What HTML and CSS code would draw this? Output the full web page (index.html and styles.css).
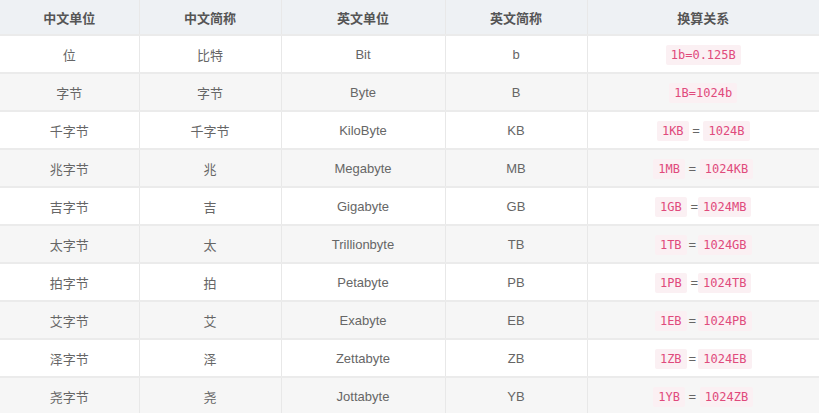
FILE: index.html
```html
<!DOCTYPE html>
<html lang="zh">
<head>
<meta charset="utf-8">
<link rel="stylesheet" href="styles.css">
</head>
<body>
<table class="units">
  <colgroup>
    <col class="c1"><col class="c2"><col class="c3"><col class="c4"><col class="c5">
  </colgroup>
  <thead>
    <tr><th>中文单位</th><th>中文简称</th><th>英文单位</th><th>英文简称</th><th>换算关系</th></tr>
  </thead>
  <tbody>
    <tr><td>位</td><td>比特</td><td>Bit</td><td>b</td><td><code>1b=0.125B</code></td></tr>
    <tr><td>字节</td><td>字节</td><td>Byte</td><td>B</td><td><code>1B=1024b</code></td></tr>
    <tr><td>千字节</td><td>千字节</td><td>KiloByte</td><td>KB</td><td><code>1KB</code> = <code>1024B</code></td></tr>
    <tr><td>兆字节</td><td>兆</td><td>Megabyte</td><td>MB</td><td><code>1MB</code> = <code>1024KB</code></td></tr>
    <tr><td>吉字节</td><td>吉</td><td>Gigabyte</td><td>GB</td><td><code>1GB</code> =<code>1024MB</code></td></tr>
    <tr><td>太字节</td><td>太</td><td>Trillionbyte</td><td>TB</td><td><code>1TB</code><span class="eq">=</span><code>1024GB</code></td></tr>
    <tr><td>拍字节</td><td>拍</td><td>Petabyte</td><td>PB</td><td><code>1PB</code> =<code>1024TB</code></td></tr>
    <tr><td>艾字节</td><td>艾</td><td>Exabyte</td><td>EB</td><td><code>1EB</code><span class="eq">=</span><code>1024PB</code></td></tr>
    <tr><td>泽字节</td><td>泽</td><td>Zettabyte</td><td>ZB</td><td><code>1ZB</code><span class="eq">=</span><code>1024EB</code></td></tr>
    <tr><td>尧字节</td><td>尧</td><td>Jottabyte</td><td>YB</td><td><code>1YB</code> = <code>1024ZB</code></td></tr>
  </tbody>
</table>
</body>
</html>
```
FILE: styles.css
```css
html, body {
  margin: 0;
  padding: 0;
  background: #ffffff;
}
body {
  font-family: "Liberation Sans", "Noto Sans CJK SC", sans-serif;
  font-size: 13px;
  color: #666666;
}
.units {
  width: 819px;
  border-collapse: collapse;
  table-layout: fixed;
}
.c1 { width: 139px; }
.c2 { width: 142px; }
.c3 { width: 164px; }
.c4 { width: 142px; }
.c5 { width: 232px; }
.units th,
.units td {
  text-align: center;
  vertical-align: middle;
  padding: 0;
  border-right: 1px solid #e8e8e8;
  border-bottom: 2px solid #ebebeb;
  white-space: nowrap;
}
.units th:last-child,
.units td:last-child {
  border-right: none;
}
.units th {
  height: 34px;
  background: #eef1f4;
  color: #555555;
  font-weight: bold;
  font-size: 13px;
}
.units td {
  height: 36px;
}
.units tbody tr:nth-child(even) td {
  background: #f6f6f6;
}
code {
  font-family: "DejaVu Sans Mono", "Liberation Mono", monospace;
  font-size: 12px;
  color: #e04a7c;
  background: #fbf0f3;
  padding: 3px 5px;
  border-radius: 2px;
}
.eq {
  margin: 0 2px;
}
```
